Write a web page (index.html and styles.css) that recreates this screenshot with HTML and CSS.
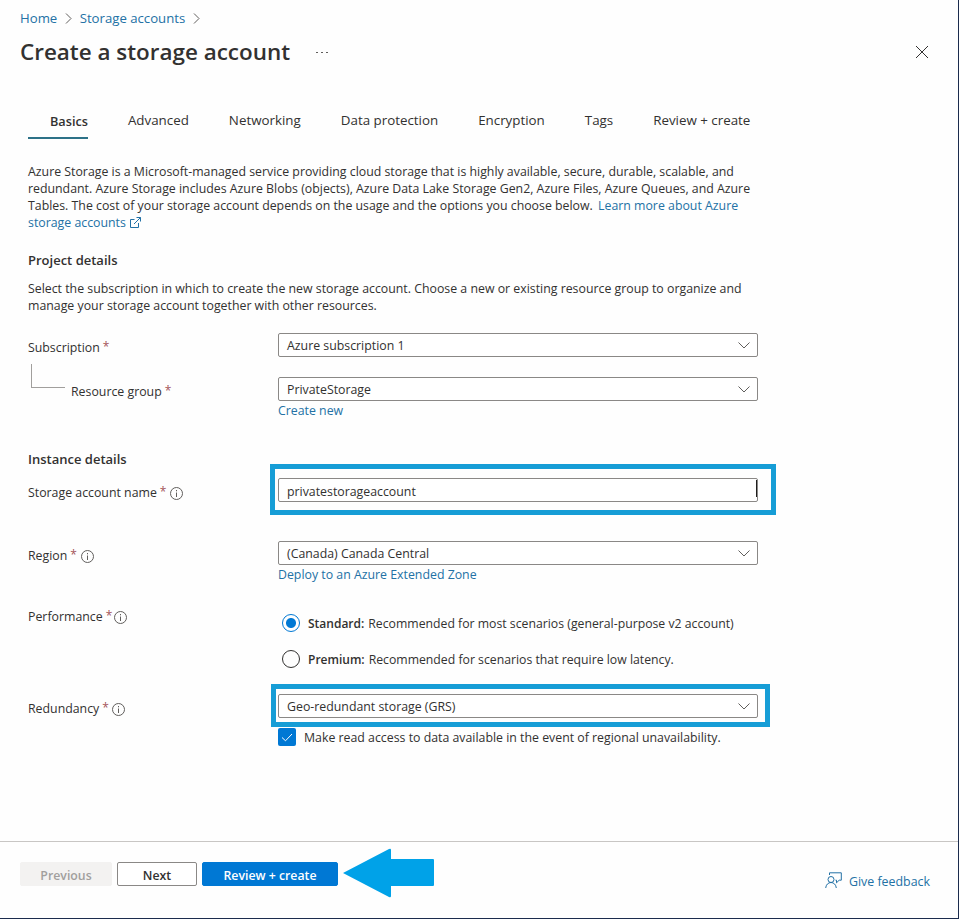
FILE: index.html
```
<!DOCTYPE html>
<html lang="en">

<head>
  <meta charset="UTF-8">
  <meta name="viewport" content="width=device-width, initial-scale=1.0">
  <title>Create a storage account</title>
  <link rel="stylesheet" href="styles.css">
</head>

<body>
  <header>
    <nav class="breadcrumb">
      <a href="#">Home</a>
      <svg width="7" height="11" viewBox="0 0 7 11"><path d="M1 .5l5 5-5 5" /></svg>
      <a href="#">Storage accounts</a>
      <svg width="7" height="11" viewBox="0 0 7 11"><path d="M1 .5l5 5-5 5" /></svg>
    </nav>
    <div class="title-bar">
      <h1>Create a storage account</h1>
      <span class="more"><i></i><i></i><i></i></span>
      <svg class="close" width="12" height="12" viewBox="0 0 12 12"><path d="M0 0l12 12M12 0L0 12" /></svg>
    </div>
  </header>

  <nav class="tabs">
    <a class="tab active" href="#">Basics</a>
    <a class="tab" href="#">Advanced</a>
    <a class="tab" href="#">Networking</a>
    <a class="tab" href="#">Data protection</a>
    <a class="tab" href="#">Encryption</a>
    <a class="tab" href="#">Tags</a>
    <a class="tab" href="#">Review + create</a>
  </nav>

  <main>
    <p>
      Azure Storage is a Microsoft-managed service providing cloud storage that is highly available, secure, durable, scalable, and<br>
      redundant. Azure Storage includes Azure Blobs (objects), Azure Data Lake Storage Gen2, Azure Files, Azure Queues, and Azure<br>
      Tables. The cost of your storage account depends on the usage and the options you choose below.
      <a class="learn" href="#">Learn more about Azure<br>storage accounts
        <svg class="external" width="11" height="11" viewBox="0 0 11 11"><path d="M4.5 2.5H.5v8h8V6M6.5.5h4v4M10.5.5L4 7" /></svg></a>
    </p>

    <h2>Project details</h2>
    <p>
      Select the subscription in which to create the new storage account. Choose a new or existing resource group to organize and<br>
      manage your storage account together with other resources.
    </p>

    <form>
      <div class="row subscription">
        <div class="label"><span>Subscription</span> <em>*</em></div>
        <div class="select"><span>Azure subscription 1</span>
          <svg width="12" height="7" viewBox="0 0 12 7"><path d="M.5.5L6 6l5.500-5.500" /></svg></div>
      </div>

      <div class="row group">
        <div class="label nested"><span>Resource group</span> <em>*</em></div>
        <div>
          <div class="select"><span>PrivateStorage</span>
            <svg width="12" height="7" viewBox="0 0 12 7"><path d="M.5.5L6 6l5.500-5.500" /></svg></div>
          <a class="below" href="#">Create new</a>
        </div>
      </div>

      <h2 class="instance">Instance details</h2>

      <div class="row name">
        <div class="label"><span>Storage account name</span> <em>*</em>
          <svg class="info" width="13" height="13" viewBox="0 0 13 13"><circle cx="6.5" cy="6.5" r="6" /><path d="M6.5 5.5V10M6.5 3v1.300" /></svg></div>
        <div class="highlight highlight-name">
          <div class="select input"><span>privatestorageaccount</span><b class="caret"></b></div>
        </div>
      </div>

      <div class="row region">
        <div class="label"><span>Region</span> <em>*</em>
          <svg class="info" width="13" height="13" viewBox="0 0 13 13"><circle cx="6.5" cy="6.5" r="6" /><path d="M6.5 5.5V10M6.5 3v1.300" /></svg></div>
        <div>
          <div class="select"><span>(Canada) Canada Central</span>
            <svg width="12" height="7" viewBox="0 0 12 7"><path d="M.5.5L6 6l5.500-5.500" /></svg></div>
          <a class="below" href="#">Deploy to an Azure Extended Zone</a>
        </div>
      </div>

      <div class="row performance">
        <div class="label"><span>Performance</span> <em>*</em>
          <svg class="info" width="13" height="13" viewBox="0 0 13 13"><circle cx="6.5" cy="6.5" r="6" /><path d="M6.5 5.5V10M6.5 3v1.300" /></svg></div>
        <div class="radios">
          <label class="radio checked"><i></i><strong>Standard:</strong><span>Recommended for most scenarios (general-purpose v2 account)</span></label>
          <label class="radio"><i></i><strong>Premium:</strong><span>Recommended for scenarios that require low latency.</span></label>
        </div>
      </div>

      <div class="row redundancy">
        <div class="label"><span>Redundancy</span> <em>*</em>
          <svg class="info" width="13" height="13" viewBox="0 0 13 13"><circle cx="6.5" cy="6.5" r="6" /><path d="M6.5 5.5V10M6.5 3v1.300" /></svg></div>
        <div>
          <div class="highlight highlight-redundancy">
            <div class="select"><span>Geo-redundant storage (GRS)</span>
              <svg width="12" height="7" viewBox="0 0 12 7"><path d="M.5.5L6 6l5.500-5.500" /></svg></div>
          </div>
          <label class="checkbox">
            <svg width="18" height="18" viewBox="0 0 18 18"><path d="M4 9.500l3.500 3.300L14 6" /></svg>
            <span>Make read access to data available in the event of regional unavailability.</span>
          </label>
        </div>
      </div>
    </form>
  </main>

  <footer>
    <button class="previous" disabled>Previous</button>
    <button class="next">Next</button>
    <button class="primary">Review + create</button>
    <svg class="arrow" width="92" height="50" viewBox="0 0 92 50"><path d="M0 25L46 1q2-1 2 1v9h42q1 0 1 1v25q0 1-1 1H48v10q0 2-2 1z" /></svg>
    <a class="feedback" href="#">
      <svg width="17" height="17" viewBox="0 0 17 17"><circle cx="6" cy="7.500" r="3" /><path d="M.7 16c.3-3.300 2.500-5.500 5.300-5.500s5 2.200 5.300 5.500M4.500 3V.8h11.800v7.400h-2.100l-2.700 2.600V8.200h-1" /></svg>
      <span>Give feedback</span>
    </a>
  </footer>
</body>

</html>
```
FILE: styles.css
```
:root {
  --text: #323130;
  --link: #2371a5;
  --primary: #0078d4;
  --border: #8a8886;
  --highlight: #169dd6;
}

* {
  box-sizing: border-box;
}

body {
  display: flex;
  flex-direction: column;
  width: 959px;
  height: 919px;
  margin: 0;
  border: solid #1b2b4d;
  border-width: 0 1px 1px 0;
  background: #fefefe;
  color: var(--text);
  font-family: "Open Sans", "Segoe UI", sans-serif;
  font-size: 12.34px;
  line-height: 17px;
  overflow: hidden;
}

a {
  color: var(--link);
  text-decoration: none;
}

svg {
  flex: none;
  fill: none;
  stroke: #605e5c;
}

h1,
h2,
p {
  margin: 0;
}

h2 {
  font-size: 13px;
  font-weight: 600;
}

.breadcrumb {
  display: flex;
  align-items: center;
  gap: 7.7px;
  padding: 10px 20px 0;
  font-size: 13.2px;
}

.title-bar {
  display: flex;
  align-items: center;
  height: 50px;
  padding: 0 30px 0 20px;
}

h1 {
  font-size: 22.450px;
  font-weight: 600;
  line-height: 30px;
}

.more {
  display: flex;
  gap: 3px;
  margin-left: 26px;
}

.more i {
  width: 2px;
  height: 1px;
  background: #605e5c;
}

.close {
  margin-left: auto;
  stroke: #323130;
}

.tabs {
  display: flex;
  gap: 40px;
  margin: 35px 0 0 28px;
}

.tab {
  height: 27px;
  color: var(--text);
  font-size: 13.350px;
}

.tab.active {
  padding: 1px 0 0 22px;
  border-bottom: 2px solid #2d7288;
  font-size: 12.7px;
  font-weight: 600;
}

main {
  padding: 24px 0 0 28px;
}

main > h2 {
  margin: 21px 0 11px;
}

.learn {
  margin-left: 2px;
}

.external {
  margin-left: 1px;
  stroke: var(--link);
  vertical-align: -1px;
}

.row {
  display: grid;
  grid-template-columns: 250px 480px;
  align-items: start;
}

.label {
  display: flex;
  align-items: center;
  gap: 4px;
}

.label em {
  width: 6px;
  margin: -2px 0 0 -1px;
  color: #a4545a;
  font-size: 12px;
  font-style: normal;
}

.select {
  display: flex;
  align-items: center;
  justify-content: space-between;
  width: 480px;
  height: 24px;
  padding: 0 7px 0 8px;
  border: 1px solid var(--border);
  border-radius: 2px;
  background: #fff;
}

.input {
  padding-top: 2px;
}

.below {
  display: block;
  padding-top: 1px;
}

.subscription {
  margin-top: 19px;
}

.group {
  margin-top: 20px;
}

.subscription .label,
.group .label {
  margin-top: 6px;
}

.nested {
  padding-left: 43px;
  position: relative;
}

/* elbow line that ties the resource group to its subscription */
.nested::before {
  content: "";
  position: absolute;
  left: 3px;
  top: -19px;
  width: 33px;
  height: 23px;
  border: solid #a19f9d;
  border-width: 0 0 1px 1px;
}

.instance {
  margin-top: 32px;
}

.name {
  margin-top: 10px;
}

.highlight {
  border: 5px solid var(--highlight);
}

.highlight-name {
  width: 506px;
  height: 51px;
  margin: -14px 0 0 -8px;
  padding: 9px 3px 0;
}

.name .label {
  margin-top: 6px;
}

.caret {
  width: 1px;
  height: 17px;
  margin: -6px -7px 0 0;
  background: #201f1e;
}

.region {
  margin-top: 26px;
}

.region .label {
  margin-top: 6px;
}

.region .info {
  margin-left: 1px;
}

.performance {
  margin-top: 25px;
}

.performance .info {
  margin-left: -2px;
}

.radios {
  display: flex;
  flex-direction: column;
  gap: 18px;
  padding: 6px 0 0 4px;
}

.radio {
  display: flex;
  align-items: center;
  height: 18px;
  font-size: 12.250px;
}

.radio i {
  width: 18px;
  height: 18px;
  margin-right: 8px;
  border: 1px solid #323130;
  border-radius: 50%;
}

.radio.checked i {
  border-color: var(--primary);
  background: radial-gradient(circle, var(--primary) 4.500px, transparent 5.500px);
}

.radio strong {
  margin-right: 4px;
  font-size: 12px;
  font-weight: 600;
}

.redundancy {
  margin-top: 16px;
}

.redundancy .label {
  margin-top: 16px;
}

.highlight-redundancy {
  width: 499px;
  height: 43px;
  margin-left: -7px;
  padding: 5px 2px 0;
}

.checkbox {
  display: flex;
  align-items: center;
  gap: 8px;
  margin-top: 1px;
}

.checkbox svg {
  border-radius: 2px;
  background: var(--primary);
  stroke: #fff;
}

.info {
  margin-top: 2px;
  stroke: #605e5c;
}

.name .info {
  margin-top: 1px;
}

footer {
  display: flex;
  align-items: flex-start;
  height: 77px;
  margin-top: auto;
  padding: 20px 28px 0 20px;
  border-top: 1px solid #c8c6c4;
}

button {
  height: 24px;
  margin-right: 5px;
  padding: 2px 0 0;
  border: 1px solid var(--border);
  border-radius: 2px;
  background: #fff;
  color: var(--text);
  font: 600 12.3px "Open Sans", sans-serif;
}

.previous {
  width: 92px;
  border-color: #f3f2f1;
  background: #f3f2f1;
  color: #a19f9d;
}

.next {
  width: 80px;
}

.primary {
  width: 136px;
  border-color: var(--primary);
  background: var(--primary);
  color: #fff;
}

.arrow {
  margin-top: -14px;
  fill: #00a2e8;
  stroke: none;
}

.feedback {
  display: flex;
  align-items: center;
  gap: 7px;
  margin: 10px 0 0 auto;
  font-size: 12.4px;
}

.feedback svg {
  margin-top: -2px;
  stroke: var(--link);
}

.feedback span {
  padding-top: 1px;
}
```
